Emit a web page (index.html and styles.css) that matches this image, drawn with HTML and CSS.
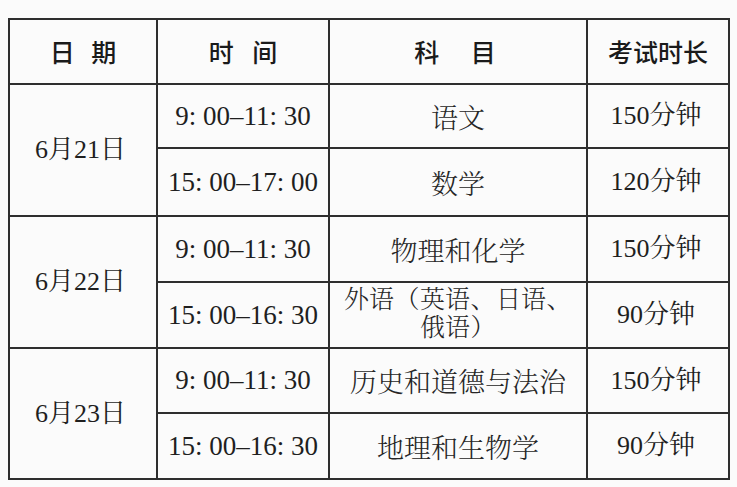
FILE: index.html
```html
<!DOCTYPE html>
<html lang="zh-CN">
<head>
<meta charset="utf-8">
<title>考试时间安排</title>
<link rel="stylesheet" href="styles.css">
</head>
<body>
<table class="schedule">
  <colgroup>
    <col class="c-date">
    <col class="c-time">
    <col class="c-subj">
    <col class="c-dur">
  </colgroup>
  <thead>
    <tr class="r-head">
      <th class="h h-date">日 期</th>
      <th class="h h-time">时 间</th>
      <th class="h h-subj">科 目</th>
      <th class="h">考试时长</th>
    </tr>
  </thead>
  <tbody>
    <tr class="r1">
      <td class="date" rowspan="2">6月21日</td>
      <td class="num">9: 00–11: 30</td>
      <td class="subj">语文</td>
      <td class="dur">150分钟</td>
    </tr>
    <tr class="r2">
      <td class="num">15: 00–17: 00</td>
      <td class="subj">数学</td>
      <td class="dur">120分钟</td>
    </tr>
    <tr class="r3">
      <td class="date" rowspan="2">6月22日</td>
      <td class="num">9: 00–11: 30</td>
      <td class="subj">物理和化学</td>
      <td class="dur">150分钟</td>
    </tr>
    <tr class="r4">
      <td class="num">15: 00–16: 30</td>
      <td class="subj subj-wrap"><span class="ln">外语<span class="pn">（</span>英语<span class="pn">、</span>日语<span class="pn">、</span></span><span class="ln">俄语<span class="pn">）</span></span></td>
      <td class="dur">90分钟</td>
    </tr>
    <tr class="r5">
      <td class="date" rowspan="2">6月23日</td>
      <td class="num">9: 00–11: 30</td>
      <td class="subj">历史和道德与法治</td>
      <td class="dur">150分钟</td>
    </tr>
    <tr class="r6">
      <td class="num">15: 00–16: 30</td>
      <td class="subj">地理和生物学</td>
      <td class="dur">90分钟</td>
    </tr>
  </tbody>
</table>
</body>
</html>
```

FILE: styles.css
```css
html, body {
  margin: 0;
  padding: 0;
  background: #fbfbfb;
}

body {
  padding: 18px 0 0 8px;
  color: #1f1f1f;
  font-family: "Liberation Serif", "Noto Serif CJK SC", "Noto Sans CJK SC", serif;
}

.schedule {
  border-collapse: collapse;
  table-layout: fixed;
  width: 720px;
  border: 2px solid #2a2a2a;
}

.c-date { width: 148px; }
.c-time { width: 172px; }
.c-subj { width: 258px; }
.c-dur  { width: 142px; }

.schedule th,
.schedule td {
  border: 2px solid #2e2e2e;
  padding: 0;
  text-align: center;
  vertical-align: middle;
  white-space: nowrap;
}

.r-head { height: 65px; }
.r1 { height: 64px; }
.r2 { height: 68px; }
.r3 { height: 66px; }
.r4 { height: 66px; }
.r5 { height: 65px; }
.r6 { height: 66px; }

.schedule .h {
  font-family: "Noto Sans CJK SC", sans-serif;
  font-weight: 500;
  font-size: 25px;
  color: #1a1a1a;
  line-height: 1;
}

.schedule .h-date { word-spacing: 11px; }
.schedule .h-time { word-spacing: 13px; }
.schedule .h-subj { word-spacing: 26px; padding-right: 6px; }

.num,
.date,
.dur {
  font-size: 27px;
  line-height: 1;
}

.schedule .date { font-size: 26px; padding-right: 5px; }
.schedule .dur { font-size: 26px; padding-right: 4px; }

.subj {
  font-family: "Noto Serif CJK SC", "Noto Sans CJK SC", serif;
  font-weight: 300;
  font-size: 27px;
  line-height: 1;
  color: #262626;
}

.schedule .subj-wrap {
  font-family: "Liberation Serif", "Noto Serif CJK SC", "Noto Sans CJK SC", serif;
  font-size: 25px;
  line-height: 28px;
  padding: 0 0 3px;
}

.ln {
  display: block;
  text-align: center;
}

.pn {
  display: inline-block;
  width: 26px;
  text-align: center;
}
```
